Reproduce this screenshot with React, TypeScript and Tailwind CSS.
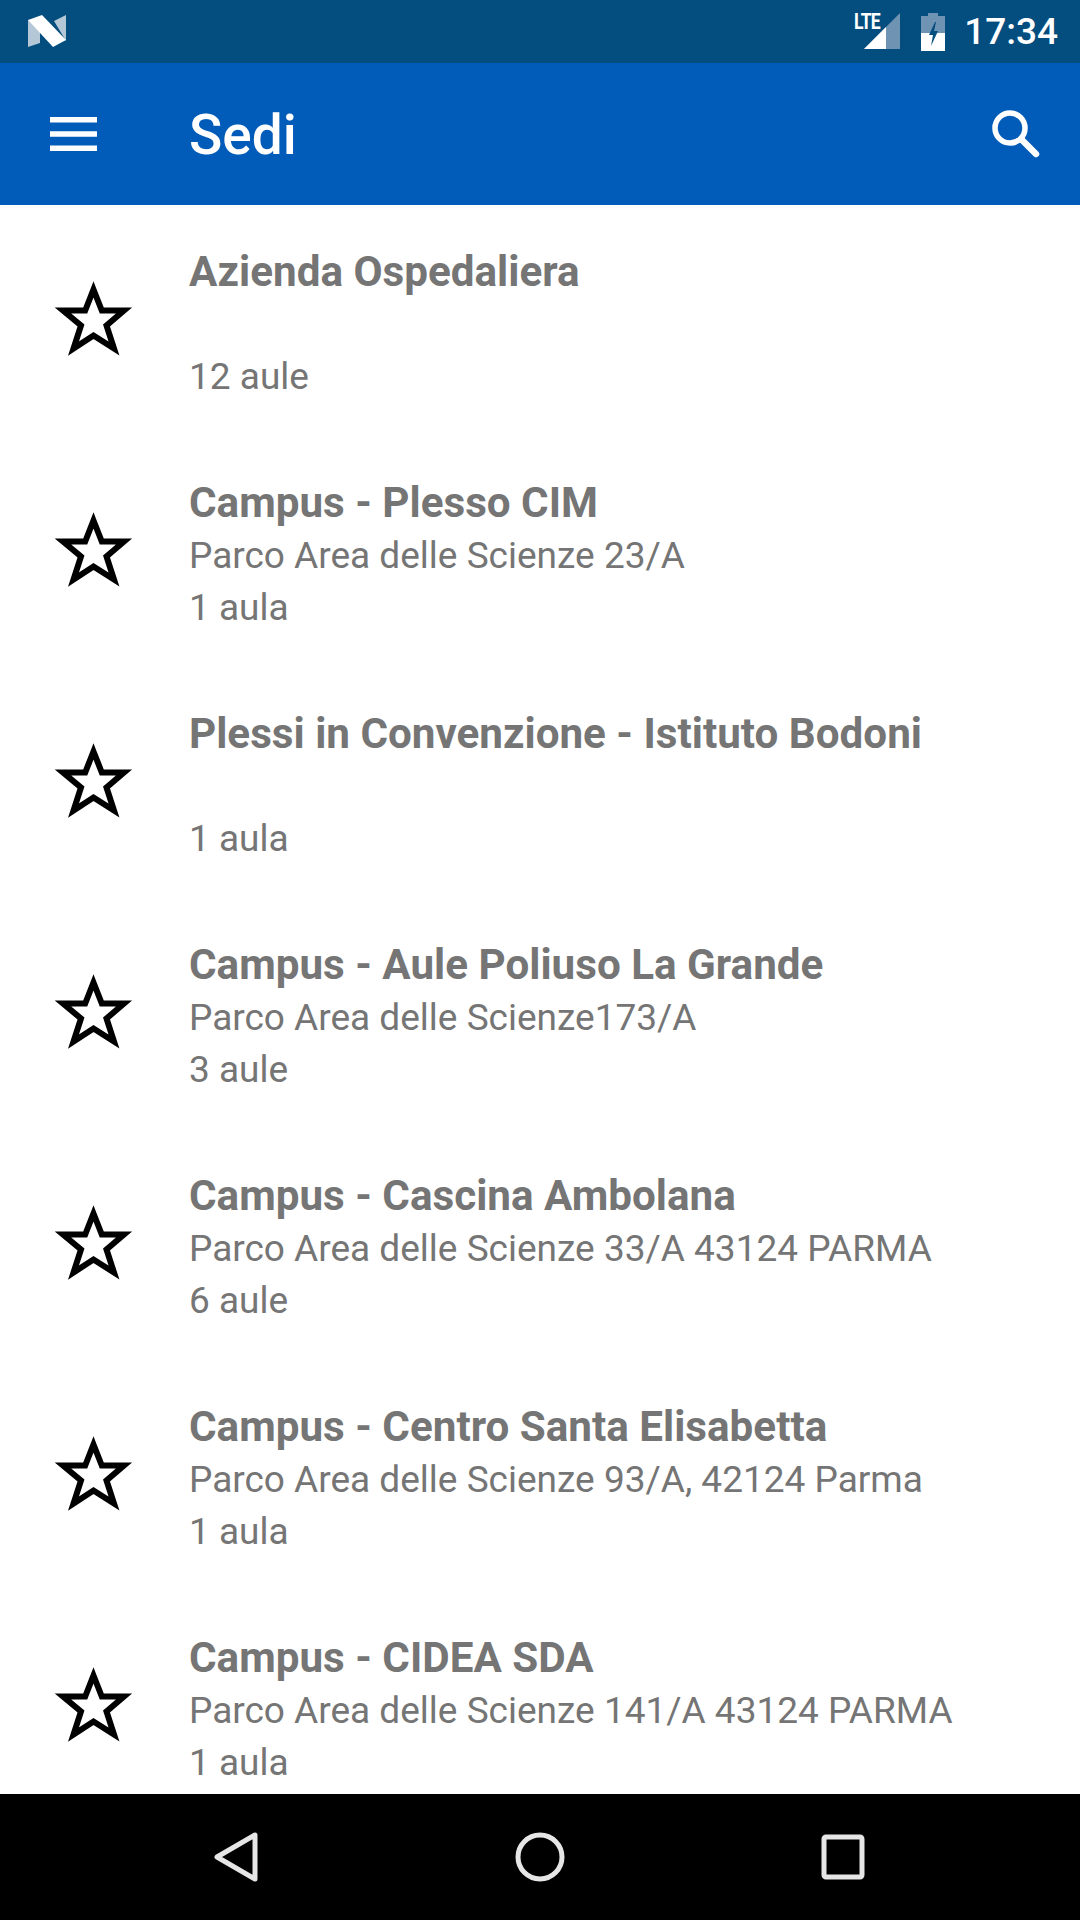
import React from 'react';

const sedi = [
  { name: 'Azienda Ospedaliera', address: '', rooms: '12 aule' },
  { name: 'Campus - Plesso CIM', address: 'Parco Area delle Scienze 23/A', rooms: '1 aula' },
  { name: 'Plessi in Convenzione - Istituto Bodoni', address: '', rooms: '1 aula' },
  { name: 'Campus - Aule Poliuso La Grande', address: 'Parco Area delle Scienze173/A', rooms: '3 aule' },
  { name: 'Campus - Cascina Ambolana', address: 'Parco Area delle Scienze 33/A 43124 PARMA', rooms: '6 aule' },
  { name: 'Campus - Centro Santa Elisabetta', address: 'Parco Area delle Scienze 93/A, 42124 Parma', rooms: '1 aula' },
  { name: 'Campus - CIDEA SDA', address: 'Parco Area delle Scienze 141/A 43124 PARMA', rooms: '1 aula' },
];

const Star = () => (
  <svg width="80" height="80" viewBox="0 0 80 80" className="block">
    <polygon
      points="39.5,9.5 47.8,30.5 70,30.5 52.5,45.5 60,68.5 39.5,55.5 19.5,68.5 27,45.5 9,30.5 31.2,30.5"
      fill="none"
      stroke="#000"
      strokeWidth="6"
      strokeLinejoin="miter"
    />
  </svg>
);

const StatusBar = () => (
  <div className="h-[63px] shrink-0 bg-[#034d7f] flex items-center pl-[28px] pr-[22px]">
    <svg width="38" height="32" viewBox="0 0 38 32" className="mb-[2px]">
      <polygon points="0,5 12,9 12,28 0,32" fill="#b4c7d6" />
      <polygon points="26,6 38,0 38,26" fill="#b4c7d6" />
      <polygon points="0,5 14,0 38,25 25,32" fill="#fff" />
    </svg>
    <div className="flex-1" />
    <div className="relative w-[46px] h-[40px] mr-[21px]">
      <span className="absolute left-0 top-[-1px] text-[22px] leading-[22px] font-bold text-white tracking-[-1px] font-['Roboto',sans-serif] origin-left scale-x-[0.8]">
        LTE
      </span>
      <svg width="46" height="40" viewBox="0 0 46 40" className="block">
        <polygon points="10,37 46,1 46,37" fill="#6f93b2" />
        <polygon points="10,37 32,15 32,37" fill="#fff" />
      </svg>
    </div>
    <svg width="24" height="38" viewBox="0 0 24 38" className="mr-[19px]">
      <path d="M7 0h10v3h7v35H0V3h7z" fill="#6f93b2" />
      <path d="M0 20h24v18H0z" fill="#fff" />
      <path d="M14 9l-6 13h4l-2 11 7-15h-4l2-9z" fill="#034d7f" />
    </svg>
    <span className="text-[37px] leading-none font-medium text-white font-['Roboto',sans-serif]">17:34</span>
  </div>
);

const ToolBar = () => (
  <div className="h-[142px] shrink-0 bg-[#005cb8] flex items-center pl-[50px] pr-[40px]">
    <svg width="47" height="34" viewBox="0 0 47 34" className="mr-[92px]">
      <path d="M0 0h47v5.5H0zM0 14.25h47v5.5H0zM0 28.5h47V34H0z" fill="#fff" />
    </svg>
    <span className="flex-1 pt-[2px] text-[55px] leading-none font-medium text-white font-['Roboto',sans-serif]">Sedi</span>
    <svg width="48" height="48" viewBox="0 0 48 48" fill="none" stroke="#fff">
      <circle cx="18" cy="18" r="15" strokeWidth="5.5" />
      <path d="M29 29l15 15" strokeWidth="6.5" strokeLinecap="round" />
    </svg>
  </div>
);

const Row = ({ name, address, rooms }: any) => (
  <div className="h-[231px] shrink-0 flex items-center">
    <div className="w-[189px] shrink-0 flex justify-center pr-[1px] pb-[1px]">
      <Star />
    </div>
    <div className="h-full pt-[40px] text-[#757575] font-['Roboto',sans-serif]">
      <div className="text-[42.2px] leading-[54px] font-bold whitespace-nowrap">{name}</div>
      <div className="text-[37px] leading-[52px] h-[52px] whitespace-nowrap">{address}</div>
      <div className="text-[37px] leading-[52px] whitespace-nowrap">{rooms}</div>
    </div>
  </div>
);

const NavBar = () => (
  <div className="h-[126px] shrink-0 bg-black flex items-center justify-center gap-[256px] pr-[2px] text-[#e6e6e6]">
    <svg width="46" height="50" viewBox="0 0 46 50" fill="none" stroke="currentColor" strokeWidth="5" strokeLinejoin="round">
      <polygon points="42,3 42,47 4,25" />
    </svg>
    <svg width="50" height="50" viewBox="0 0 50 50" fill="none" stroke="currentColor" strokeWidth="5">
      <circle cx="25" cy="25" r="22" />
    </svg>
    <svg width="44" height="46" viewBox="0 0 44 46" fill="none" stroke="currentColor" strokeWidth="5" strokeLinejoin="round">
      <rect x="3" y="3" width="38" height="40" rx="2" />
    </svg>
  </div>
);

export default function App() {
  return (
    <div className="w-[1080px] h-[1920px] flex flex-col overflow-hidden bg-white">
      <StatusBar />
      <ToolBar />
      <div className="flex-1 overflow-hidden flex flex-col">
        {sedi.map((s) => (
          <Row key={s.name} {...s} />
        ))}
      </div>
      <NavBar />
    </div>
  );
}
